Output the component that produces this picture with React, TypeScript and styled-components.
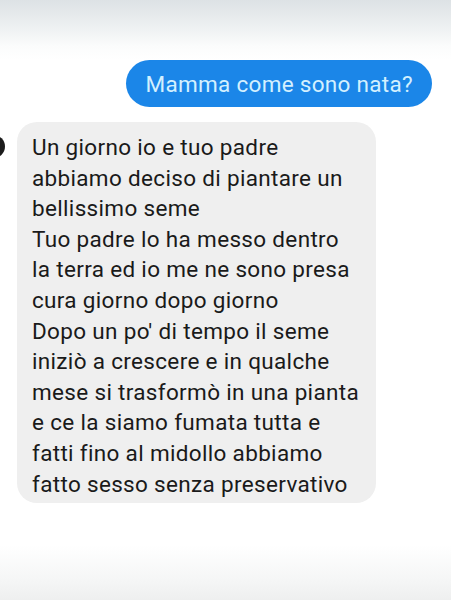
import styled, { createGlobalStyle } from "styled-components";

const Global = createGlobalStyle`
  html, body {
    margin: 0;
    padding: 0;
    background: #fdfdfd;
  }
  body {
    font-family: Roboto, "Noto Sans", "Liberation Sans", sans-serif;
  }
`;

const Screen = styled.div`
  width: 451px;
  height: 600px;
  display: flex;
  flex-direction: column;
  overflow: hidden;
  background: linear-gradient(
    to bottom,
    #dde2e5 0px,
    #eef1f2 28px,
    #fbfcfc 46px,
    #ffffff 60px,
    #ffffff 545px,
    #f5f6f6 580px,
    #eeefef 600px
  );
`;

const Thread = styled.div`
  display: flex;
  flex-direction: column;
  padding: 60px 19px 0 0;
  gap: 15px;
`;

const OutRow = styled.div`
  display: flex;
  justify-content: flex-end;
`;

const OutBubble = styled.div`
  height: 47px;
  box-sizing: border-box;
  padding: 0 19px 0 20px;
  display: flex;
  align-items: center;
  border-radius: 24px;
  background: #1b86e8;
  color: #d3f0ff;
  font-size: 22.5px;
  letter-spacing: 0.3px;
`;

const InRow = styled.div`
  position: relative;
  display: flex;
  padding-left: 17px;
`;

const Avatar = styled.div`
  position: absolute;
  left: -18px;
  top: 13px;
  width: 23px;
  height: 23px;
  border-radius: 50%;
  background: #1c1c1c;
`;

const InBubble = styled.div`
  width: 359px;
  box-sizing: border-box;
  padding: 10px 8px 4px 15px;
  border-radius: 20px;
  background: #efefef;
  color: #1a1a1a;
  font-size: 22.5px;
  line-height: 30.6px;
  letter-spacing: 0.33px;
`;

const Line = styled.div`
  white-space: nowrap;
`;

const lines = [
  "Un giorno io e tuo padre",
  "abbiamo deciso di piantare un",
  "bellissimo seme",
  "Tuo padre lo ha messo dentro",
  "la terra ed io me ne sono presa",
  "cura giorno dopo giorno",
  "Dopo un po' di tempo il seme",
  "iniziò a crescere e in qualche",
  "mese si trasformò in una pianta",
  "e ce la siamo fumata tutta e",
  "fatti fino al midollo abbiamo",
  "fatto sesso senza preservativo",
];

export default function App() {
  return (
    <Screen>
      <Global />
      <Thread>
        <OutRow>
          <OutBubble>Mamma come sono nata?</OutBubble>
        </OutRow>
        <InRow>
          <Avatar />
          <InBubble>
            {lines.map((l) => (
              <Line key={l}>{l}</Line>
            ))}
          </InBubble>
        </InRow>
      </Thread>
    </Screen>
  );
}
